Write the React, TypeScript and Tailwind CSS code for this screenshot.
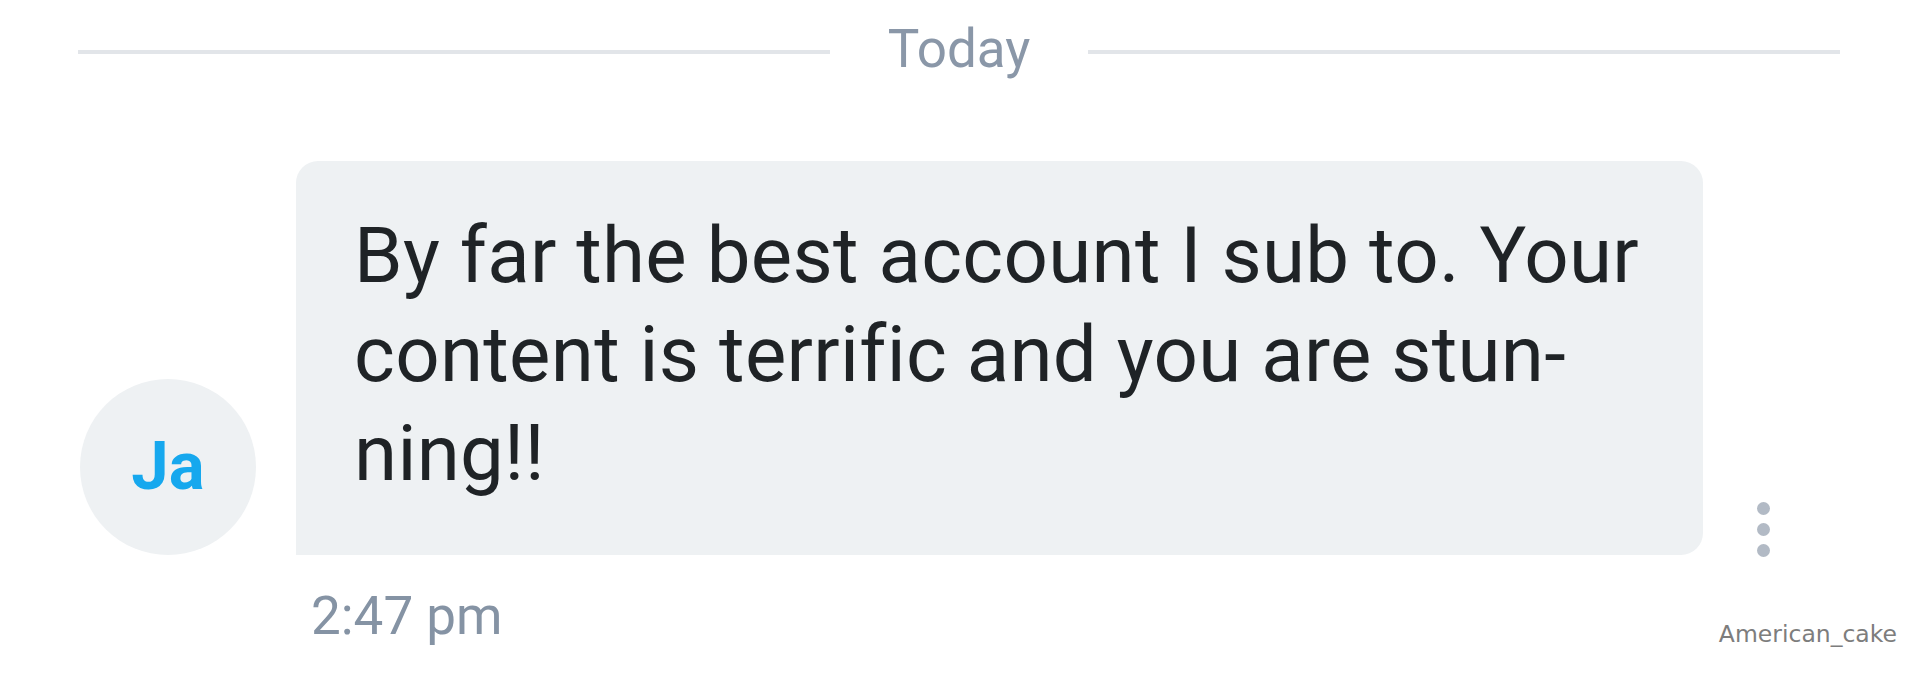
import React from "react";

export default function App() {
  return (
    <div className="relative w-[1920px] h-[673px] bg-white overflow-hidden [font-family:Roboto,'Liberation_Sans',sans-serif]">
      {/* Date divider */}
      <div className="flex items-start pt-[17px] pl-[78px] pr-[80px]">
        <div className="flex-1 h-[4px] mt-[33px] bg-[#e2e5e9]" />
        <div className="px-[58px] text-[53px] leading-[64px] text-[#8a97a8]">Today</div>
        <div className="flex-1 h-[4px] mt-[33px] bg-[#e2e5e9]" />
      </div>

      {/* Message row */}
      <div className="flex items-end pl-[80px] mt-[80px]">
        <div className="w-[176px] h-[176px] rounded-full bg-[#eef1f3] flex items-center justify-center shrink-0">
          <span className="text-[67px] font-bold leading-none text-[#16a8ee] -mt-[2px]">Ja</span>
        </div>
        <div className="ml-[40px] w-[1407px] rounded-[22px] rounded-bl-none bg-[#eef1f3] pl-[58px] pt-[45px] pb-[52px] text-[78px] leading-[99px] tracking-[0.3px] text-[#1f2326]">
          By far the best account I sub to. Your
          <br />
          content is terrific and you are stun-
          <br />
          ning!!
        </div>
        <div className="ml-[54px] mb-[-2px] flex flex-col gap-[8px]">
          <div className="w-[13px] h-[13px] rounded-full bg-[#b2bac5]" />
          <div className="w-[13px] h-[13px] rounded-full bg-[#b2bac5]" />
          <div className="w-[13px] h-[13px] rounded-full bg-[#b2bac5]" />
        </div>
      </div>

      {/* Timestamp */}
      <div className="pl-[311px] mt-[30px] text-[53px] leading-[62px] text-[#8593a4]">2:47 pm</div>

      {/* Watermark */}
      <div className="absolute right-[23px] bottom-[21px] text-[23.5px] [font-family:'DejaVu_Sans',sans-serif] text-[#7d7d7d]">
        American_cake
      </div>
    </div>
  );
}
